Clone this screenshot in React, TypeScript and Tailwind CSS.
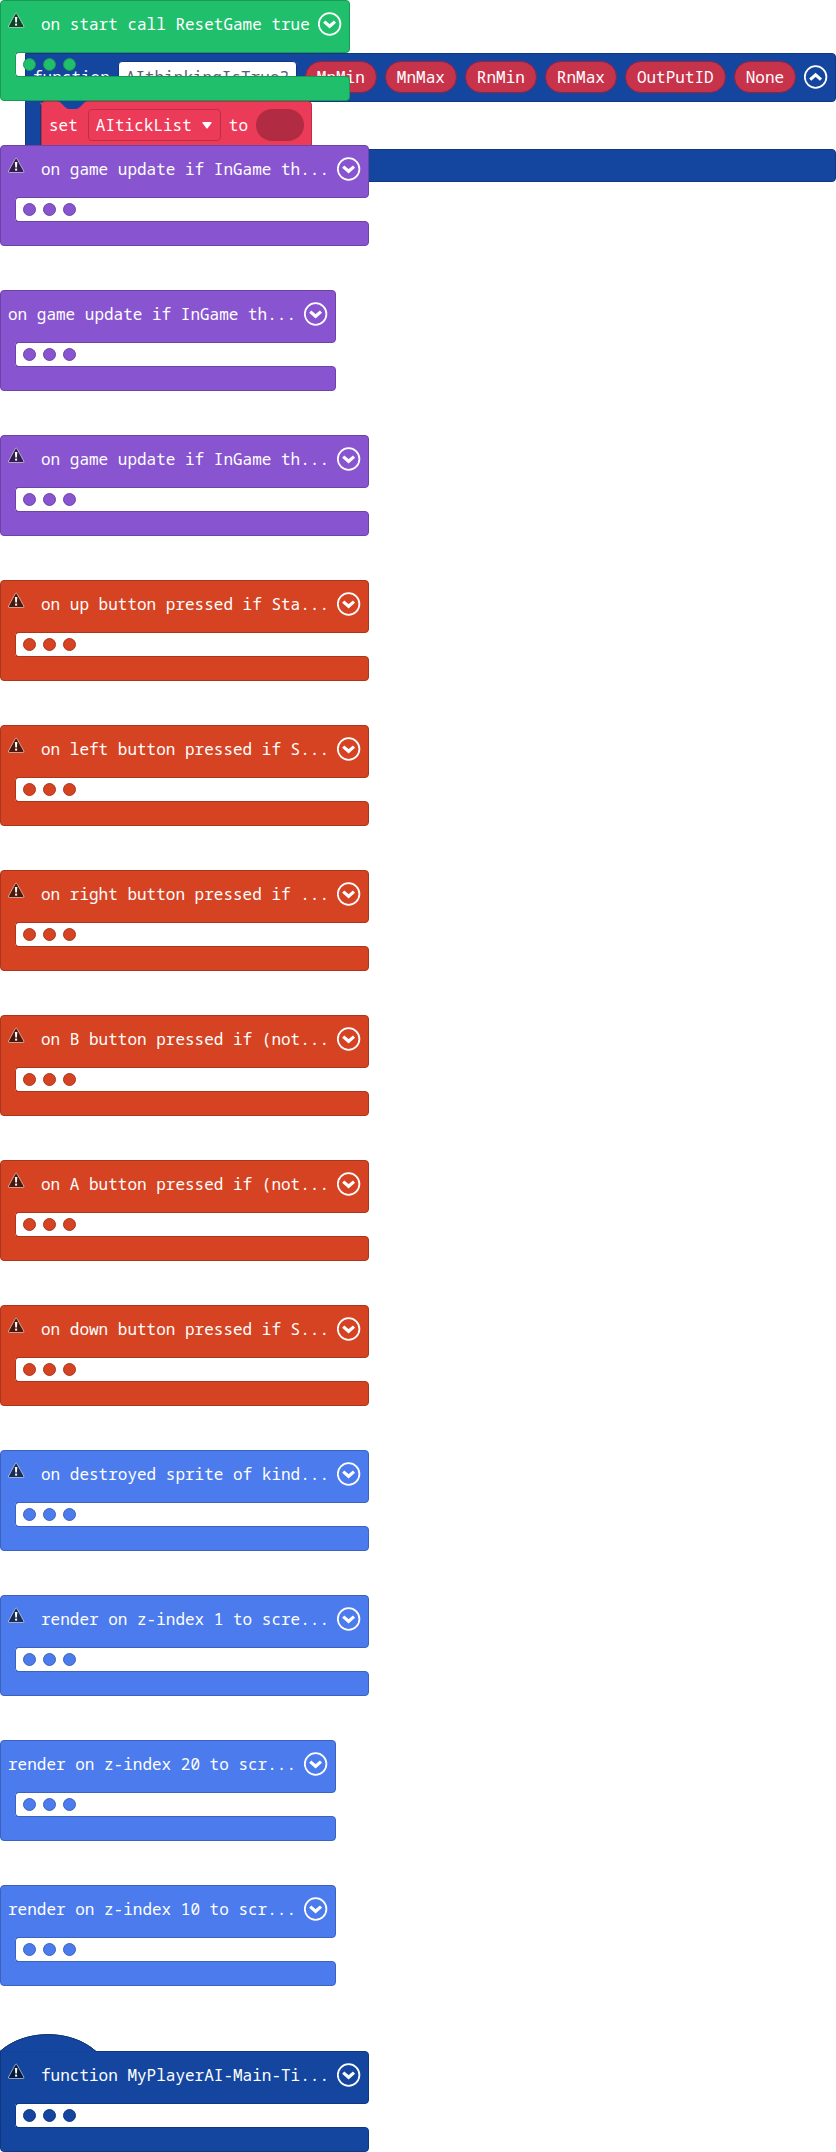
import React from "react";

type Tone = "green" | "purple" | "orange" | "blue" | "navy";

type Block = { label: string; tone: Tone; warning: boolean; hat?: boolean };

const tones: Record<Tone, { fill: string; edge: string; well: string; svg: string }> = {
  green: {
    fill: "bg-[#20bf6b]",
    edge: "border-[#1a9956]",
    well: "shadow-[0_0_0_4px_#20bf6b]",
    svg: "fill-[#20bf6b] stroke-[#1a9956]",
  },
  purple: {
    fill: "bg-[#8854d0]",
    edge: "border-[#6d43a6]",
    well: "shadow-[0_0_0_4px_#8854d0]",
    svg: "fill-[#8854d0] stroke-[#6d43a6]",
  },
  orange: {
    fill: "bg-[#d54322]",
    edge: "border-[#aa361b]",
    well: "shadow-[0_0_0_4px_#d54322]",
    svg: "fill-[#d54322] stroke-[#aa361b]",
  },
  blue: {
    fill: "bg-[#4b7bec]",
    edge: "border-[#3c62bd]",
    well: "shadow-[0_0_0_4px_#4b7bec]",
    svg: "fill-[#4b7bec] stroke-[#3c62bd]",
  },
  navy: {
    fill: "bg-[#1446a0]",
    edge: "border-[#103880]",
    well: "shadow-[0_0_0_4px_#1446a0]",
    svg: "fill-[#1446a0] stroke-[#103880]",
  },
};

const blocks: Block[] = [
  { label: "on start call ResetGame true", tone: "green", warning: true },
  { label: "on game update if InGame th...", tone: "purple", warning: true },
  { label: "on game update if InGame th...", tone: "purple", warning: false },
  { label: "on game update if InGame th...", tone: "purple", warning: true },
  { label: "on up button pressed if Sta...", tone: "orange", warning: true },
  { label: "on left button pressed if S...", tone: "orange", warning: true },
  { label: "on right button pressed if ...", tone: "orange", warning: true },
  { label: "on B button pressed if (not...", tone: "orange", warning: true },
  { label: "on A button pressed if (not...", tone: "orange", warning: true },
  { label: "on down button pressed if S...", tone: "orange", warning: true },
  { label: "on destroyed sprite of kind...", tone: "blue", warning: true },
  { label: "render on z-index 1 to scre...", tone: "blue", warning: true },
  { label: "render on z-index 20 to scr...", tone: "blue", warning: false },
  { label: "render on z-index 10 to scr...", tone: "blue", warning: false },
  { label: "function MyPlayerAI-Main-Ti...", tone: "navy", warning: true, hat: true },
];

const parameters = ["MnMin", "MnMax", "RnMin", "RnMax", "OutPutID", "None"];

function ToggleButton({ open }: { open: boolean }) {
  return (
    <button type="button" aria-label={open ? "Collapse block" : "Expand block"} className="block size-6 shrink-0">
      <svg viewBox="0 0 24 24" className="size-6" fill="none" stroke="white">
        <circle cx="11.6" cy="12" r="10.8" strokeWidth="1.8" />
        <path d={open ? "M6.2 14.6 11.6 9.9l5.4 4.7" : "M6.2 9.6 11.6 14.3l5.4-4.7"} strokeWidth="3.2" />
      </svg>
    </button>
  );
}

function WarningIcon() {
  return (
    <svg viewBox="0 0 17 17" className="mr-4 mb-[6px] size-[17px] shrink-0" role="img" aria-label="Warning">
      <path
        d="M7.3 1.6Q8.1.4 8.9 1.6L15.8 14Q16.4 15.5 14.9 15.5H1.5Q0 15.5.6 14Z"
        fill="black"
        fillOpacity="0.64"
        stroke="white"
        strokeOpacity="0.55"
        strokeWidth="1"
      />
      <path d="M6.9 5h2.4l-.4 5.6H7.3Z" fill="white" />
      <rect x="7.1" y="11.6" width="2" height="2" fill="white" />
    </svg>
  );
}

/* The left arm of a C-shaped block, with the rounded inner corners of its mouth. */
function Arm({ tone, className }: { tone: Tone; className: string }) {
  const t = tones[tone];
  return (
    <div className={`relative -my-px flex w-5 shrink-0 overflow-hidden border-l ${t.edge} ${className}`}>
      <div className={`w-[14px] ${t.fill}`} />
      <div className={`relative grow rounded-l-[4px] border-y border-l ${t.edge} ${t.well}`} />
    </div>
  );
}

function CollapsedBlock({ block }: { block: Block }) {
  const t = tones[block.tone];
  return (
    <section className={`w-fit ${block.hat ? "mt-1" : ""}`}>
      {block.hat && (
        <svg viewBox="0 0 97 18" className="relative -mb-px block h-[18px] w-[97px]">
          <path d="M0 17.5C25-5 71-5 96 17.5V18H0Z" className={t.svg} stroke="none" />
          <path d="M0 17.5C25-5 71-5 96 17.5" className={t.svg} />
        </svg>
      )}
      <header
        className={`flex h-[53px] items-center rounded-r-[4px] border pr-[7px] pb-[6px] pl-[7px] ${block.hat ? "" : "rounded-tl-[4px]"} ${t.fill} ${t.edge}`}
      >
        {block.warning && <WarningIcon />}
        <span className="mr-2 whitespace-pre">{block.label}</span>
        <ToggleButton open={false} />
      </header>
      <div className="flex h-[23px] items-center">
        <Arm tone={block.tone} className="h-[25px]" />
        <div className="ml-[3px] flex gap-[7px]">
          <span className={`size-[13px] rounded-full border ${t.fill} ${t.edge}`} />
          <span className={`size-[13px] rounded-full border ${t.fill} ${t.edge}`} />
          <span className={`size-[13px] rounded-full border ${t.fill} ${t.edge}`} />
        </div>
      </div>
      <div className={`h-[25px] rounded-r-[4px] rounded-bl-[4px] border ${t.fill} ${t.edge}`} />
    </section>
  );
}

function SetVariable() {
  return (
    <div className="relative -ml-1 flex h-12 w-fit items-center gap-2 rounded-[4px] border border-[#bd2f47] bg-[#ec3b59] px-[7px]">
      <svg viewBox="0 0 32 9" className="absolute -top-px left-[14px] h-[9px] w-8">
        <path d="M0 0C3 0 4 1 5 2L9 6Q11 8 13 8H20Q22 8 24 6L28 2C29 1 30 0 32 0Z" fill="#1446a0" />
      </svg>
      <label htmlFor="variable">set</label>
      <div className="relative ml-[2px] h-8">
        <select
          id="variable"
          defaultValue="AItickList"
          className="h-8 w-[133px] appearance-none rounded-[4px] border border-[#bd2f47] bg-transparent pl-[7px] outline-none"
        >
          <option>AItickList</option>
        </select>
        <svg viewBox="0 0 10 7" className="pointer-events-none absolute top-[13px] right-[9px] h-[7px] w-[10px]">
          <path d="M1 0h8q1 0 .6 1L5.8 6q-.8 1-1.6 0L.4 1Q0 0 1 0Z" fill="white" />
        </svg>
      </div>
      <span>to</span>
      <span className="h-8 w-12 rounded-full bg-[#b12c43]" />
    </div>
  );
}

function FunctionBlock() {
  return (
    <section className="absolute top-[53px] right-0 left-[25px]">
      <header className="flex h-[49px] items-center gap-2 rounded-r-[4px] border border-[#103880] bg-[#1446a0] px-[7px] pb-[2px]">
        <label htmlFor="function-name">function</label>
        <input
          id="function-name"
          type="text"
          defaultValue="AIthinkingIsTrue?"
          className="h-8 w-[179px] shrink-0 rounded-[4px] border border-[#103880] bg-white px-[7px] text-[#575e75] outline-none"
        />
        {parameters.map((name) => (
          <span
            key={name}
            className="flex h-8 shrink-0 items-center rounded-full border border-[#8e2546] bg-[#c8334c] px-[11px]"
          >
            {name}
          </span>
        ))}
        <ToggleButton open={true} />
      </header>
      <div className="-mt-px flex h-[49px]">
        <Arm tone="navy" className="mt-0 h-[50px]" />
        <SetVariable />
      </div>
      <div className="-mt-px h-[33px] rounded-r-[4px] rounded-bl-[4px] border border-[#103880] bg-[#1446a0]" />
    </section>
  );
}

export default function App() {
  return (
    <main className="relative bg-white font-['Noto_Sans_Mono','DejaVu_Sans_Mono',monospace] text-base leading-6 text-white">
      <FunctionBlock />
      <div className="relative flex w-fit flex-col gap-11">
        {blocks.map((block, index) => (
          <CollapsedBlock key={index} block={block} />
        ))}
      </div>
    </main>
  );
}
